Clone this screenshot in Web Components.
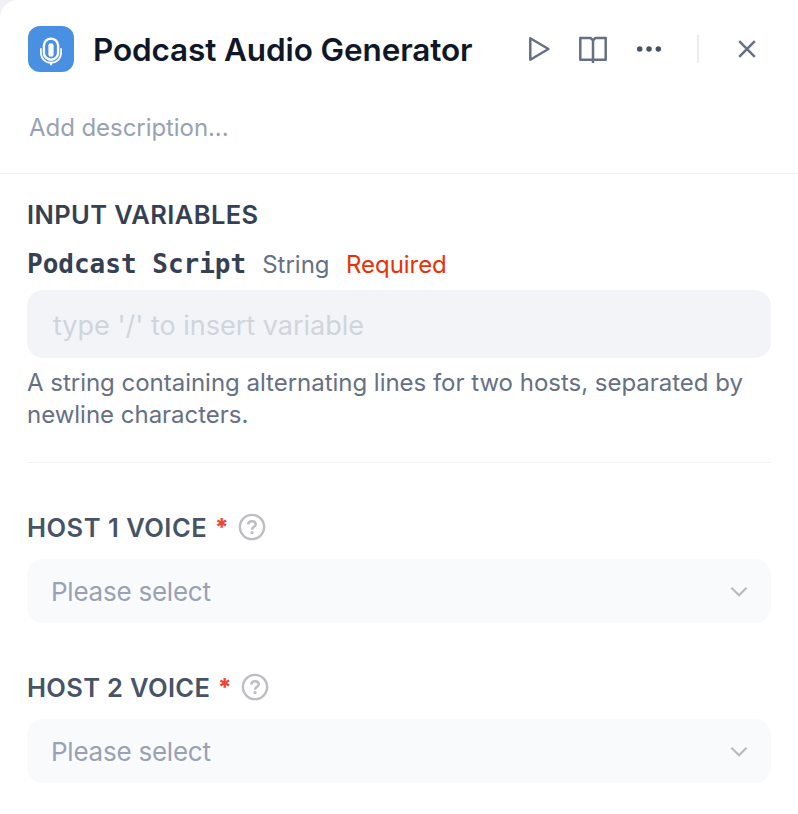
<!DOCTYPE html>
<html lang="en">
<head>
<meta charset="utf-8">
<title>Podcast Audio Generator</title>
<style>
html,body{margin:0;height:100%;background:#eff1f5;overflow:hidden}
body{font-family:Inter,"Liberation Sans",sans-serif}
</style>
</head>
<body>
<node-panel>
  <panel-header slot="header" heading="Podcast Audio Generator" description="Add description..."></panel-header>
  <input-variable name="Podcast Script" type="String" placeholder="type '/' to insert variable">A string containing alternating lines for two hosts, separated by newline characters.</input-variable>
  <voice-select style="--tracking:.5px">HOST 1 VOICE</voice-select>
  <voice-select style="--tracking:.33px">HOST 2 VOICE</voice-select>
</node-panel>
<script>
const define = (name, html, setup) => customElements.define(name, class extends HTMLElement {
  connectedCallback() {
    if (this.shadowRoot) return;
    this.attachShadow({mode: 'open'}).innerHTML = html;
    if (setup) setup(this, this.shadowRoot);
  }
});

define('node-panel', `
<style>
:host{display:flex;flex-direction:column;box-sizing:border-box;width:798px;height:814px;background:#fff;border-top-left-radius:18px}
main{display:flex;flex-direction:column;padding:0 27px}
</style>
<slot name="header"></slot><main><slot></slot></main>`);

define('tool-icon', `
<style>
:host{display:block}
svg{display:block;fill:none;stroke:#667085;stroke-width:2.5;overflow:visible}
</style><svg></svg>`, (el, root) => {
  const icons = {
    play: [22, 26, '<path d="M2.3 2.2V23.8L20.4 13Z" stroke-linejoin="round"/>'],
    book: [28, 28, '<path d="M14 5.3L11.6 3H1.3V24.7H26.7V3H16.4L14 5.3V28" stroke-linejoin="round"/>'],
    more: [26, 6, '<g fill="#475467" stroke="none"><circle cx="3.7" cy="3" r="2.75"/><circle cx="13" cy="3" r="2.75"/><circle cx="22.3" cy="3" r="2.75"/></g>'],
    close: [18, 18, '<path d="M1.2 1.2L16.8 16.8M16.8 1.2L1.2 16.8"/>'],
    chevron: [18, 12, '<path d="M1.4 2.8L9 10.2L16.6 2.8" stroke="#b9babd" stroke-width="2.2"/>'],
    help: [28, 28, '<g stroke="#bdbec2"><circle cx="14" cy="14" r="12.1" stroke-width="2.4"/><path d="M10.3 11.6C10.3 9.5 11.8 8.2 14 8.2S17.7 9.5 17.7 11.4C17.7 13.9 14 13.8 14 16.7" stroke-width="2.5"/></g><circle cx="14" cy="19.7" r="1.6" fill="#bdbec2" stroke="none"/>'],
    mic: [24, 30, '<g stroke="#fff"><rect x="4.9" y="2.6" width="14.2" height="21.2" rx="7.1" stroke-width="2.4"/><path d="M1.9 12.3V16.3C1.9 22.6 6 26.7 12 26.7S22.1 22.6 22.1 16.3V12.3" stroke-width="1.7"/><path d="M12 26.5V29.2" stroke-width="2"/></g><rect x="9.4" y="7.2" width="5.2" height="13.6" rx="2.4" fill="#fff" stroke="none"/>']
  };
  const [w, h, body] = icons[el.getAttribute('name')];
  const svg = root.querySelector('svg');
  svg.setAttribute('width', w);
  svg.setAttribute('height', h);
  svg.setAttribute('viewBox', `0 0 ${w} ${h}`);
  svg.innerHTML = body;
});

define('panel-header', `
<style>
:host{display:block;box-sizing:border-box;height:174px;padding:26px 41px 0 28px;border-bottom:1px solid #f1f2f4}
.row{display:flex;align-items:center;height:46px}
.app{display:flex;align-items:center;justify-content:center;width:46px;height:46px;border-radius:12px;background:#4a90e2}
.app tool-icon{margin-top:4px}
h1{margin:0 0 0 19px;width:435px;font-size:31.5px;line-height:48px;padding-top:1px;font-weight:600;color:#101828;white-space:nowrap;letter-spacing:-.12px}
.more{margin-left:29px}.book{margin-left:29px}
.rule{width:2px;height:28px;margin:0 39px 0 35px;background:#eaecf0}
p{margin:39px 0 0 1px;font-size:24px;line-height:34px;color:#98a2b3;letter-spacing:-.06px}
</style>
<div class="row"><div class="app"><tool-icon name="mic"></tool-icon></div><h1></h1>
<tool-icon name="play"></tool-icon><tool-icon class="book" name="book"></tool-icon><tool-icon class="more" name="more"></tool-icon><div class="rule"></div><tool-icon name="close"></tool-icon></div>
<p></p>`, (el, root) => {
  root.querySelector('h1').textContent = el.getAttribute('heading');
  root.querySelector('p').textContent = el.getAttribute('description');
});

define('input-variable', `
<style>
:host{display:block;box-sizing:border-box;height:289px;padding-top:24px}
h2{margin:0;font-size:25.5px;line-height:34px;font-weight:600;color:#354052;letter-spacing:.4px}
.label{display:flex;align-items:baseline;margin-top:12px;height:40px;line-height:40px;font-size:24px}
.name{font:bold 26px/40px "DejaVu Sans Mono",monospace;color:#354052}
.type{margin-left:16px;color:#667085}
.req{margin-left:16.5px;color:#ec2f05;letter-spacing:-.05px}
.box{box-sizing:border-box;display:flex;align-items:center;height:68px;margin-top:6px;padding:2px 0 0 26px;border-radius:16px;background:#f2f4f7;color:#d0d5dd;font-size:27px}
p{margin:9px 0 0;font-size:24px;line-height:32px;color:#667085;letter-spacing:-.02px}
.end{height:1px;margin-top:31px;background:#f2f3f5}
</style>
<h2>INPUT VARIABLES</h2>
<div class="label"><span class="name"></span><span class="type"></span><span class="req">Required</span></div>
<div class="box"></div><p><slot></slot></p><div class="end"></div>`, (el, root) => {
  root.querySelector('.name').textContent = el.getAttribute('name');
  root.querySelector('.type').textContent = el.getAttribute('type');
  root.querySelector('.box').textContent = el.getAttribute('placeholder');
});

define('voice-select', `
<style>
:host{display:block;height:112px;padding-top:48px}
.label{display:flex;align-items:center;height:32px;font-size:25.5px;font-weight:600;color:#475467;letter-spacing:var(--tracking)}
.star{margin-left:7.5px;color:#f04438;font-weight:800;font-size:24px;letter-spacing:0}
tool-icon[name=help]{margin-left:9px}
.box{display:flex;align-items:center;justify-content:space-between;height:64px;margin-top:16px;padding:0 23px 0 24px;border-radius:16px;background:#f9fafc;color:#98a2b3;font-size:26px;letter-spacing:-.24px}
</style>
<div class="label"><slot></slot><span class="star">*</span><tool-icon name="help"></tool-icon></div>
<div class="box"><span>Please select</span><tool-icon name="chevron"></tool-icon></div>`);
</script>
</body>
</html>
